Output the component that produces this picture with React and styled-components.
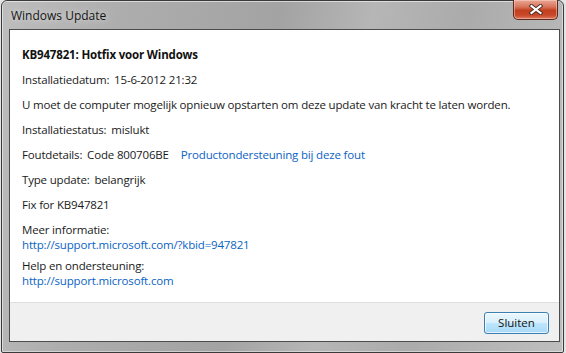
import React from "react";
import styled, { createGlobalStyle } from "styled-components";

const Global = createGlobalStyle`
  html, body { margin: 0; padding: 0; }
  body {
    width: 566px; height: 353px; overflow: hidden;
    background: #e4e4e4;
    font-family: "Open Sans", "Noto Sans", "Liberation Sans", sans-serif;
  }
`;

const Desk = styled.div`
  width: 566px;
  height: 353px;
  display: flex;
  padding: 0 2px 0 1px;
  box-sizing: border-box;
`;

const Window = styled.div`
  flex: 1;
  display: flex;
  flex-direction: column;
  box-sizing: border-box;
  border: 1px solid #3a3a3a;
  border-radius: 6px 6px 2px 2px;
  padding: 0 3px 10px 7px;
  background:
    linear-gradient(180deg, rgba(255,255,255,0.55) 0, rgba(255,255,255,0.55) 1px, transparent 1px),
    linear-gradient(100deg, #bdbdbd 0%, #adadad 20%, #a3a3a3 45%, #b6b6b6 60%, #ababab 75%, #bebebe 100%);
  box-shadow: inset 1px 0 0 rgba(255,255,255,0.5), inset -1px 0 0 rgba(255,255,255,0.5), inset 0 -1px 0 rgba(255,255,255,0.45);
`;

const TitleBar = styled.div`
  height: 28px;
  display: flex;
  justify-content: space-between;
  align-items: flex-start;
`;

const Title = styled.div`
  padding: 6px 0 0 2px;
  font-size: 12px;
  line-height: 17px;
  color: #151515;
  text-shadow: 0 0 6px rgba(255,255,255,0.7);
`;

const CloseButton = styled.div`
  width: 45px;
  height: 20px;
  margin-top: -1px;
  margin-right: 2px;
  box-sizing: border-box;
  border: 1px solid #5c2a1c;
  border-top: none;
  border-radius: 0 0 5px 5px;
  background: linear-gradient(180deg, #e9a795 0%, #d9765d 35%, #c23f1f 55%, #c9482a 80%, #dd7c5f 100%);
  box-shadow: inset 0 0 0 1px rgba(255,220,210,0.45);
  display: flex;
  align-items: center;
  justify-content: center;
`;

const Client = styled.div`
  flex: 1;
  display: flex;
  flex-direction: column;
  border: 1px solid #4c4c4c;
  background: #ffffff;
`;

const Content = styled.div`
  flex: 1;
  padding: 17px 12px 0 12px;
  display: flex;
  flex-direction: column;
  gap: 10px;
  font-size: 11.5px;
  letter-spacing: -0.17px;
  line-height: 15px;
  color: #1a1a1a;
`;

const Heading = styled.div`
  font-weight: 700;
  color: #111;
`;

const Row = styled.div`
  white-space: nowrap;
`;

const Pair = styled.div`
  display: flex;
  flex-direction: column;
  line-height: 15px;
  margin-top: ${(p) => p.$mt || 0}px;
`;

const Label = styled.span`
  margin-right: 2px;
`;

const Link = styled.a`
  color: #0a63c4;
  text-decoration: none;
  margin-left: ${(p) => p.$ml || 0}px;
`;

const Footer = styled.div`
  height: 29px;
  background: #f0f0f0;
  border-top: 1px solid #dfdfdf;
  display: flex;
  justify-content: flex-end;
  align-items: flex-start;
  padding: 9px 10px 0 0;
  box-sizing: content-box;
`;

const Button = styled.button`
  width: 65px;
  height: 22px;
  box-sizing: border-box;
  border: 1px solid #3c7fb1;
  border-radius: 3px;
  background: linear-gradient(180deg, #eaf6fd 0%, #d9f0fc 50%, #bee6fd 51%, #a7d9f5 100%);
  box-shadow: inset 0 0 0 1px rgba(255,255,255,0.7);
  font-family: inherit;
  font-size: 11.5px;
  color: #111;
  padding: 0;
  line-height: 18px;
`;

export default function App() {
  return (
    <>
      <Global />
      <Desk>
        <Window>
          <TitleBar>
            <Title>Windows Update</Title>
            <CloseButton>
              <svg width="14" height="11" viewBox="0 0 14 11">
                <path d="M2.5 2 L11.5 9 M11.5 2 L2.5 9" stroke="#4a2a22" strokeWidth="4" strokeLinecap="square" />
                <path d="M2.5 2 L11.5 9 M11.5 2 L2.5 9" stroke="#ffffff" strokeWidth="2.2" strokeLinecap="square" />
              </svg>
            </CloseButton>
          </TitleBar>
          <Client>
            <Content>
              <Heading>KB947821: Hotfix voor Windows</Heading>
              <Row><Label>Installatiedatum:</Label> 15-6-2012 21:32</Row>
              <Row>U moet de computer mogelijk opnieuw opstarten om deze update van kracht te laten worden.</Row>
              <Row><Label>Installatiestatus:</Label> mislukt</Row>
              <Row>
                <Label>Foutdetails:</Label> Code 800706BE
                <Link href="#" $ml={12}>Productondersteuning bij deze fout</Link>
              </Row>
              <Row><Label>Type update:</Label> belangrijk</Row>
              <Row>Fix for KB947821</Row>
              <Pair>
                <span>Meer informatie:</span>
                <Link href="#">http://support.microsoft.com/?kbid=947821</Link>
              </Pair>
              <Pair $mt={-4}>
                <span>Help en ondersteuning:</span>
                <Link href="#">http://support.microsoft.com</Link>
              </Pair>
            </Content>
            <Footer>
              <Button>Sluiten</Button>
            </Footer>
          </Client>
        </Window>
      </Desk>
    </>
  );
}
